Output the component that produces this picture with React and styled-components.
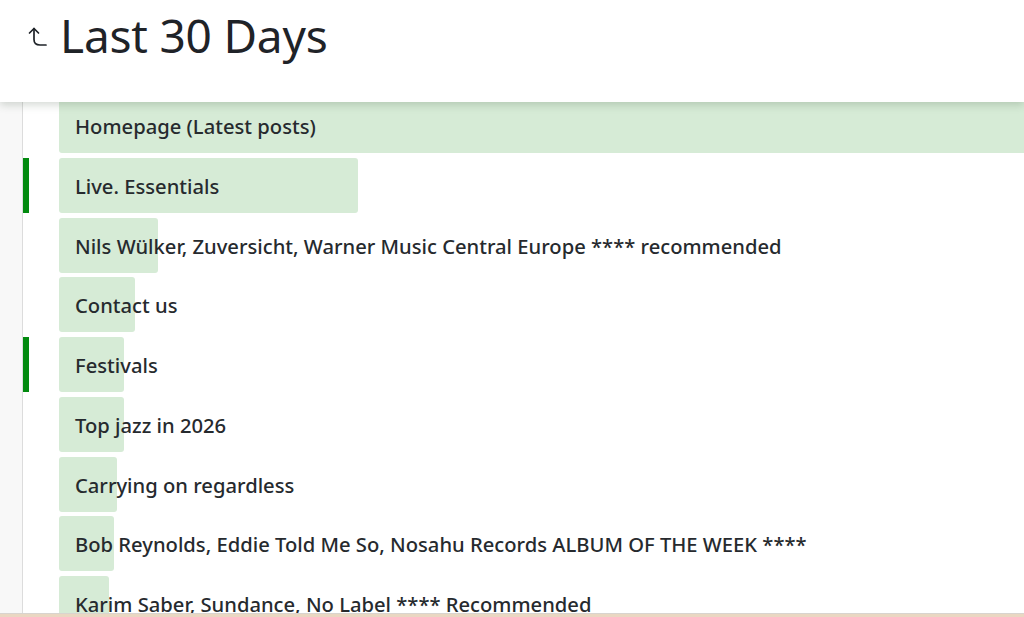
import React from "react";
import styled, { createGlobalStyle } from "styled-components";

const GlobalStyle = createGlobalStyle`
  html, body {
    margin: 0;
    padding: 0;
    background: #ffffff;
    overflow: hidden;
  }
  body {
    font-family: "Noto Sans", "Open Sans", sans-serif;
    color: #212529;
  }
`;

const Page = styled.div`
  height: 617px;
  display: flex;
  flex-direction: column;
  overflow: hidden;
`;

const Header = styled.header`
  position: relative;
  z-index: 2;
  height: 102px;
  margin-bottom: -4px;
  background: #ffffff;
  box-shadow: 0 3px 8px rgba(60, 80, 60, 0.22);
  display: flex;
  align-items: flex-start;
  padding: 5px 0 0 28px;
  box-sizing: border-box;
`;

const BackIcon = styled.svg`
  width: 22px;
  height: 22px;
  margin-top: 21px;
  margin-right: 10px;
  flex-shrink: 0;
`;

const Title = styled.h1`
  margin: 0;
  font-family: "Noto Sans", sans-serif;
  font-weight: 400;
  font-size: 46px;
  line-height: 60px;
  color: #1f2328;
  letter-spacing: -0.2px;
`;

const Body = styled.div`
  flex: 1;
  display: flex;
  min-height: 0;
`;

const Gutter = styled.div`
  width: 22px;
  flex-shrink: 0;
  background: #f8f8f8;
  border-right: 1px solid #dcdcdc;
`;

const List = styled.ul`
  flex: 1;
  list-style: none;
  margin: 0;
  padding: 0;
  display: flex;
  flex-direction: column;
  gap: 4.75px;
  overflow: hidden;
`;

const Row = styled.li`
  height: 55px;
  flex-shrink: 0;
  display: flex;
  align-items: stretch;
`;

const Marker = styled.div`
  width: 6px;
  flex-shrink: 0;
  background: ${(p) => (p.$active ? "#028a0f" : "transparent")};
`;

const Cell = styled.div`
  position: relative;
  flex: 1;
  margin-left: 30px;
  display: flex;
  align-items: center;
  padding: 1px 0 0 16px;
  box-sizing: border-box;
`;

const Bar = styled.div`
  position: absolute;
  left: 0;
  top: 0;
  bottom: 0;
  background: #d6ebd6;
  border-radius: ${(p) => (p.$full ? "3px 0 0 3px" : "3px")};
`;

const Label = styled.span`
  position: relative;
  font-size: 20.2px;
  font-weight: 500;
  color: #262a2e;
  white-space: nowrap;
`;

const Footer = styled.div`
  height: 3px;
  flex-shrink: 0;
  border-top: 1px solid #d9d4cf;
  background: #ead7c2;
`;

const rows = [
  { label: "Homepage (Latest posts)", width: "100%", full: true },
  { label: "Live. Essentials", width: "299px", active: true },
  { label: "Nils Wülker, Zuversicht, Warner Music Central Europe **** recommended", width: "99px" },
  { label: "Contact us", width: "76px" },
  { label: "Festivals", width: "65px", active: true },
  { label: "Top jazz in 2026", width: "65px" },
  { label: "Carrying on regardless", width: "58px" },
  { label: "Bob Reynolds, Eddie Told Me So, Nosahu Records ALBUM OF THE WEEK ****", width: "55px" },
  { label: "Karim Saber, Sundance, No Label **** Recommended", width: "50px" },
];

export default function App() {
  return (
    <Page>
      <GlobalStyle />
      <Header>
        <BackIcon viewBox="0 0 22 22" fill="none" stroke="#1f2328" strokeWidth="1.7" strokeLinecap="round" strokeLinejoin="round">
          <path d="M1.5 7L6 2.5l4.5 4.5" />
          <path d="M6 2.5v11c0 4 2 5.5 6 5.5h6" />
        </BackIcon>
        <Title>Last 30 Days</Title>
      </Header>
      <Body>
        <Gutter />
        <List>
          {rows.map((r) => (
            <Row key={r.label}>
              <Marker $active={r.active} />
              <Cell>
                <Bar $full={r.full} style={{ width: r.width }} />
                <Label>{r.label}</Label>
              </Cell>
            </Row>
          ))}
        </List>
      </Body>
      <Footer />
    </Page>
  );
}
